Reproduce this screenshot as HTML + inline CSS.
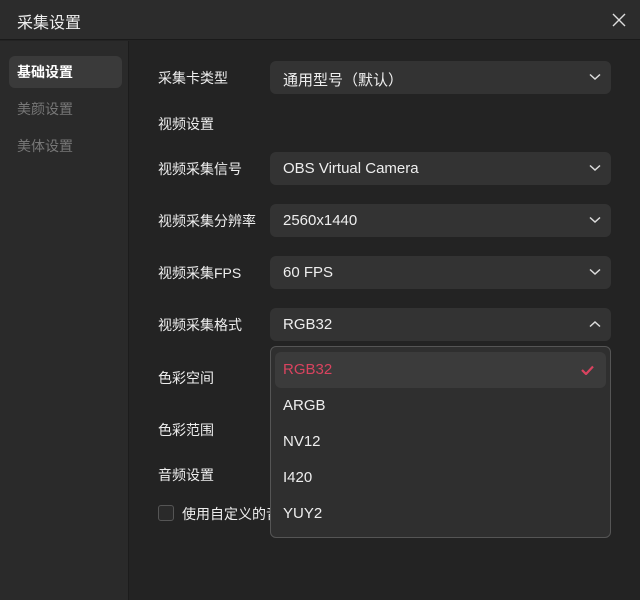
<!DOCTYPE html>
<html><head><meta charset="utf-8"><style>
*{margin:0;padding:0;box-sizing:border-box}
body{width:640px;height:600px;background:#232323;font-family:"Liberation Sans","Noto Sans CJK SC",sans-serif;color:#e8e8e8;position:relative;overflow:hidden;font-size:14px}
.title{position:absolute;left:0;top:0;width:640px;height:40px;background:#2c2c2c;border-bottom:1px solid #1a1a1a}
.title span{position:absolute;left:17px;top:9px;font-size:16px;color:#eee}
.close{position:absolute;right:14px;top:13px}
.side{position:absolute;left:0;top:41px;width:129px;height:559px;background:#2a2a2a;border-right:1px solid #1c1c1c}
.nav{position:absolute;left:9px;width:113px;height:32px;border-radius:6px;padding:6px 8px;font-size:14px}
.lab{position:absolute;left:158px;font-size:14px;color:#eee}
.sel{position:absolute;left:270px;width:341px;height:33px;background:#333;border-radius:6px;padding:8px 13px;font-size:15px;color:#eee}
.sel svg{position:absolute;right:10px;top:12px}
.dd{position:absolute;left:270px;top:346px;width:341px;height:192px;background:#2f2f2f;border:1px solid #555;border-radius:6px}
.it{position:absolute;left:12px;font-size:15px;color:#eee}
</style></head><body>
<div class="title"><span>采集设置</span>
<svg class="close" width="14" height="14" viewBox="0 0 14 14"><path d="M1 1L13 13M13 1L1 13" stroke="#ddd" stroke-width="1.4"/></svg></div>
<div class="side">
<div class="nav" style="top:15px;background:#3a3a3a;color:#fff;font-weight:bold">基础设置</div>
<div class="nav" style="top:52px;color:#777">美颜设置</div>
<div class="nav" style="top:89px;color:#777">美体设置</div>
</div>
<div class="lab" style="top:68px">采集卡类型</div>
<div class="sel" style="top:61px">通用型号（默认）<svg width="12" height="8"><path d="M1 1.5L6 6L11 1.5" stroke="#ddd" stroke-width="1.5" fill="none"/></svg></div>
<div class="lab" style="top:114px">视频设置</div>
<div class="lab" style="top:159px">视频采集信号</div>
<div class="sel" style="top:152px">OBS Virtual Camera<svg width="12" height="8"><path d="M1 1.5L6 6L11 1.5" stroke="#ddd" stroke-width="1.5" fill="none"/></svg></div>
<div class="lab" style="top:211px">视频采集分辨率</div>
<div class="sel" style="top:204px">2560x1440<svg width="12" height="8"><path d="M1 1.5L6 6L11 1.5" stroke="#ddd" stroke-width="1.5" fill="none"/></svg></div>
<div class="lab" style="top:263px">视频采集FPS</div>
<div class="sel" style="top:256px">60 FPS<svg width="12" height="8"><path d="M1 1.5L6 6L11 1.5" stroke="#ddd" stroke-width="1.5" fill="none"/></svg></div>
<div class="lab" style="top:315px">视频采集格式</div>
<div class="sel" style="top:308px">RGB32<svg width="12" height="8"><path d="M1 6.5L6 2L11 6.5" stroke="#ddd" stroke-width="1.5" fill="none"/></svg></div>
<div class="lab" style="top:368px">色彩空间</div>
<div class="lab" style="top:420px">色彩范围</div>
<div class="lab" style="top:465px">音频设置</div>
<div style="position:absolute;left:158px;top:505px;width:16px;height:16px;border:1px solid #555;border-radius:3px;background:#2a2a2a"></div>
<div class="lab" style="left:182px;top:504px">使用自定义的音频</div>
<div class="dd">
<div style="position:absolute;left:4px;top:5px;width:331px;height:36px;background:#3b3b3b;border-radius:6px"></div>
<div class="it" style="top:14px;color:#d9435f">RGB32</div>
<svg style="position:absolute;right:16px;top:18px" width="13" height="10"><path d="M1 5L5 9L12 1.5" stroke="#d9435f" stroke-width="2.2" fill="none"/></svg>
<div class="it" style="top:50px">ARGB</div>
<div class="it" style="top:86px">NV12</div>
<div class="it" style="top:122px">I420</div>
<div class="it" style="top:158px">YUY2</div>
</div>
</body></html>
